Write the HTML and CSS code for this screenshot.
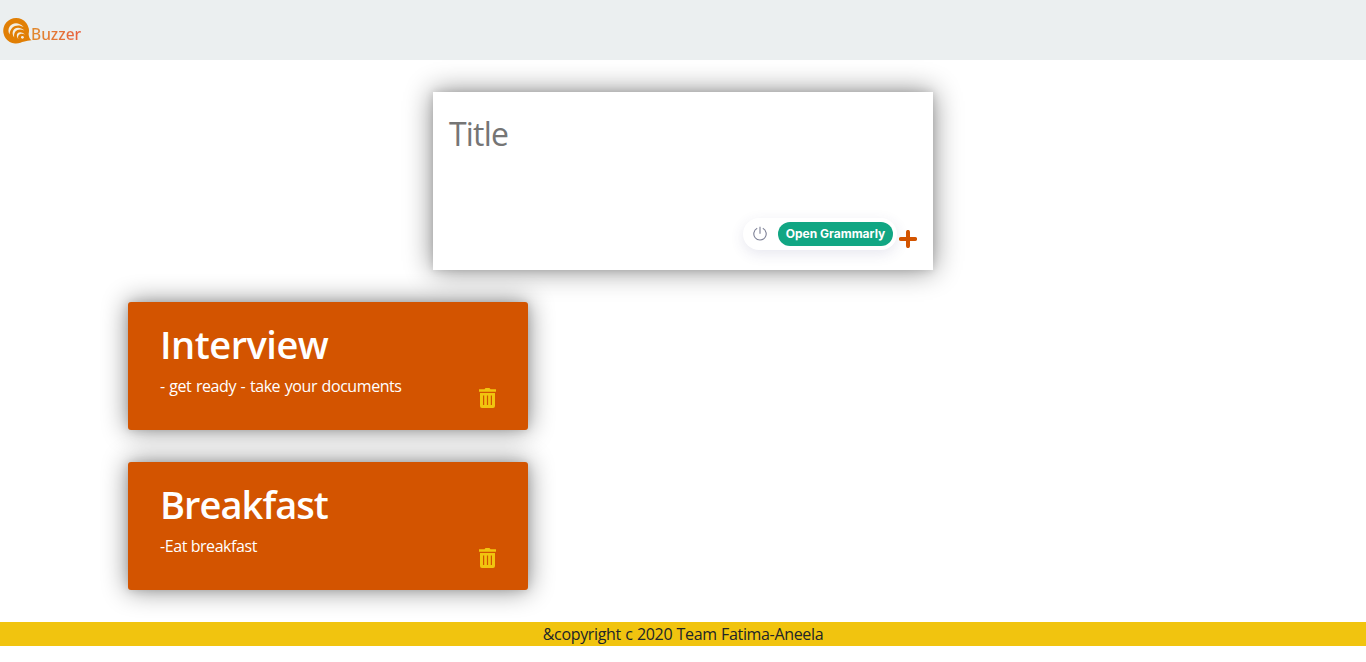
FILE: index.html
```html
<!DOCTYPE html>
<html lang="en">
<head>
<meta charset="utf-8">
<title>Buzzer</title>
<link rel="stylesheet" href="styles.css">
</head>
<body>
<header class="header">
  <div class="brand">
    <svg class="logo" width="29" height="28" viewBox="0 0 29 28">
      <path d="M13 1A12.8 12.8 0 1 0 17.5 25.8Q20 24.3 28.5 23.2Q26 21.8 25.6 17A12.8 12.8 0 0 0 13 1Z" fill="#e17f05"/>
      <g fill="#f3eee3">
        <path d="M6.6 17.5C2 9.5 12.5 1.2 20.6 10C14.5 6.2 6.8 9.4 6.6 17.5Z"/>
        <path d="M11.2 20.6C6.2 13 14.2 7 21.4 13.6C15.6 10.8 10.2 13.6 11.2 20.6Z"/>
        <path d="M15.4 22.2C11.2 16.6 16.4 12.4 22 17.4C17.4 15.6 14 17.8 15.4 22.2Z"/>
        <circle cx="19.4" cy="20.3" r="1.4"/>
      </g>
    </svg>
    <span class="brand-name">Buzzer</span>
  </div>
</header>
<main>
  <form class="note-form">
    <div class="title-field">Title</div>
    <div class="form-actions">
      <div class="grammar">
        <svg width="16" height="16" viewBox="0 0 16 16" fill="none" stroke="#7d8096" stroke-width="1.1"><path d="M5.2 2.3a6.2 6.2 0 1 0 5.6 0M8 .8v7"/></svg>
        <span class="grammar-label">Open Grammarly</span>
      </div>
      <svg class="plus" width="18" height="18" viewBox="0 0 18 18"><path d="M9 1.9v14.2M1.9 9h14.2" stroke="#d35400" stroke-width="4" stroke-linecap="round"/></svg>
    </div>
  </form>
  <section class="notes">
    <article class="note">
      <h1 class="interview">Interview</h1>
      <p class="interview-text">- get ready - take your documents</p>
      <svg class="trash" width="17" height="20" viewBox="0 0 17 20"><path d="M0 1.3h5.5L6.5 0h4l1 1.3H17v2.5H0z" fill="#f1c40f"/><path fill-rule="evenodd" d="M1 5h15v13q0 2-2 2H3q-2 0-2-2zM4 7.6v9.5h1.2V7.6zM7.9 7.6v9.5h1.2V7.6zM11.8 7.6v9.5H13V7.6z" fill="#f1c40f"/></svg>
    </article>
    <article class="note">
      <h1 class="breakfast">Breakfast</h1>
      <p class="breakfast-text">-Eat breakfast</p>
      <svg class="trash" width="17" height="20" viewBox="0 0 17 20"><path d="M0 1.3h5.5L6.5 0h4l1 1.3H17v2.5H0z" fill="#f1c40f"/><path fill-rule="evenodd" d="M1 5h15v13q0 2-2 2H3q-2 0-2-2zM4 7.6v9.5h1.2V7.6zM7.9 7.6v9.5h1.2V7.6zM11.8 7.6v9.5H13V7.6z" fill="#f1c40f"/></svg>
    </article>
  </section>
</main>
<footer class="footer"><span>&amp;copyright c 2020 Team Fatima-Aneela</span></footer>
</body>
</html>
```
FILE: styles.css
```css
* { box-sizing: border-box; }
body { margin: 0; background: #fff; font: 16px/24px "Segoe UI", "Open Sans", "Noto Sans", sans-serif; }
h1, p { margin: 0; }
svg { display: block; flex: none; }
.header { height: 60px; background: #ebeff0; }
.brand { display: flex; padding: 17px 0 0 3px; }
.brand-name {
  font: 500 15.5px/20px "Noto Sans", sans-serif; margin-top: 7px; margin-left: -1px;
  background: linear-gradient(90deg, #e08a2c, #e8603f);
  background-clip: text; -webkit-background-clip: text; color: transparent;
}
.note-form {
  width: 500px; height: 178px; margin: 32px auto; padding: 16px; background: #fff;
  display: flex; flex-direction: column; justify-content: space-between;
  box-shadow: 0 0 8px rgba(0, 0, 0, .12), 0 0 26px rgba(0, 0, 0, .48);
}
.title-field { color: #757575; font-size: 32px; line-height: 52px; letter-spacing: -.8px; }
.form-actions { display: flex; justify-content: flex-end; align-items: center; gap: 2px; height: 32px; margin-bottom: 4px; }
.grammar {
  width: 154px; height: 32px; border-radius: 16px; padding: 0 4px 0 9px; background: #fff;
  display: flex; align-items: center; justify-content: space-between;
  box-shadow: 0 4px 14px rgba(60, 60, 120, .12);
}
.grammar-label {
  width: 115px; height: 24px; border-radius: 12px; background: #11a683; color: #fff;
  font: 700 12px/24px Inter, sans-serif; text-align: center;
}
.plus { margin-top: 10px; }
.notes { display: flex; flex-direction: column; gap: 32px; padding-left: 128px; }
.note {
  width: 400px; height: 128px; border-radius: 3px; padding: 16px 32px; background: #d35400; color: #fff;
  display: grid; grid-template-columns: 1fr 17px; grid-template-rows: 56px 24px 26px;
  box-shadow: 0 0 8px rgba(0, 0, 0, .12), 0 0 26px rgba(0, 0, 0, .48);
}
.note h1 { grid-column: 1 / 3; font-size: 38px; line-height: 52px; font-weight: 600; }
.interview { letter-spacing: -.5px; }
.breakfast { letter-spacing: -.95px; }
.note p { white-space: nowrap; }
.interview-text { letter-spacing: -.43px; word-spacing: .85px; }
.breakfast-text { letter-spacing: -.43px; }
.trash { margin-top: 14px; }
.footer { margin-top: 32px; height: 24px; background: #f1c40f; color: #212529; text-align: center; letter-spacing: -.34px; word-spacing: .55px; }
```
